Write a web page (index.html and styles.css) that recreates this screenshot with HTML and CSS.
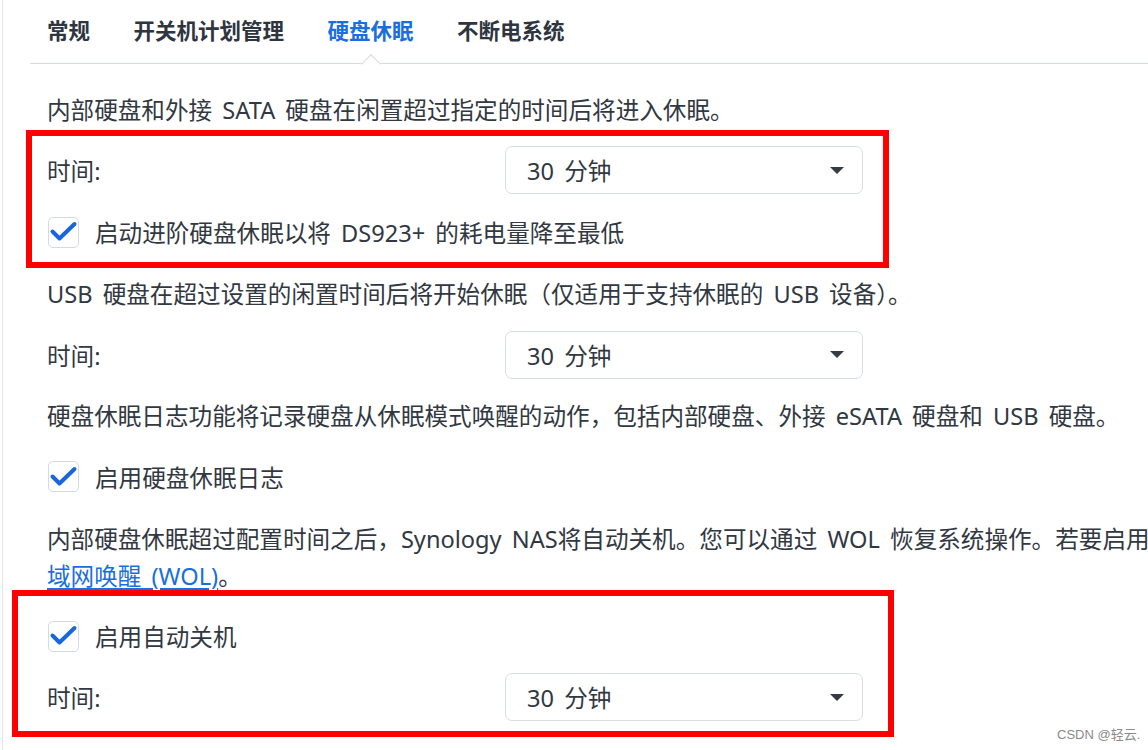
FILE: index.html
```html
<!DOCTYPE html>
<html lang="zh-CN">
<head>
<meta charset="utf-8">
<title>硬盘休眠</title>
<link rel="stylesheet" href="styles.css">
</head>
<body>
<div class="page">
  <div class="tabs">
    <div class="tab">常规</div>
    <div class="tab">开关机计划管理</div>
    <div class="tab active">硬盘休眠</div>
    <div class="tab">不断电系统</div>
  </div>
  <div class="content">
    <div class="para">内部硬盘和外接 SATA 硬盘在闲置超过指定的时间后将进入休眠。</div>
    <div class="field">
      <span class="label">时间:</span>
      <div class="select"><span>30 分钟</span><span class="caret"></span></div>
    </div>
    <div class="check">
      <span class="box"><svg viewBox="0 0 31 31" width="31" height="31"><path d="M4.5 15.5 L11.5 22.5 L26.5 8" fill="none" stroke="#1766dc" stroke-width="4" stroke-linecap="round" stroke-linejoin="round"/></svg></span>
      <span class="check-label">启动进阶硬盘休眠以将 DS923+ 的耗电量降至最低</span>
    </div>
    <div class="para">USB 硬盘在超过设置的闲置时间后将开始休眠（仅适用于支持休眠的 USB 设备）。</div>
    <div class="field">
      <span class="label">时间:</span>
      <div class="select"><span>30 分钟</span><span class="caret"></span></div>
    </div>
    <div class="para">硬盘休眠日志功能将记录硬盘从休眠模式唤醒的动作，包括内部硬盘、外接 eSATA 硬盘和 USB 硬盘。</div>
    <div class="check">
      <span class="box"><svg viewBox="0 0 31 31" width="31" height="31"><path d="M4.5 15.5 L11.5 22.5 L26.5 8" fill="none" stroke="#1766dc" stroke-width="4" stroke-linecap="round" stroke-linejoin="round"/></svg></span>
      <span class="check-label">启用硬盘休眠日志</span>
    </div>
    <div class="para">内部硬盘休眠超过配置时间之后，Synology NAS将自动关机。您可以通过 WOL 恢复系统操作。若要启用<a class="link" href="#">局</a><br><a class="link" href="#">域网唤醒 (WOL)</a>。</div>
    <div class="check">
      <span class="box"><svg viewBox="0 0 31 31" width="31" height="31"><path d="M4.5 15.5 L11.5 22.5 L26.5 8" fill="none" stroke="#1766dc" stroke-width="4" stroke-linecap="round" stroke-linejoin="round"/></svg></span>
      <span class="check-label">启用自动关机</span>
    </div>
    <div class="field">
      <span class="label">时间:</span>
      <div class="select"><span>30 分钟</span><span class="caret"></span></div>
    </div>
  </div>
  <div class="mark mark-one"></div>
  <div class="mark mark-two"></div>
  <div class="watermark">CSDN @轻云.</div>
</div>
</body>
</html>
```

FILE: styles.css
```css
html, body {
  margin: 0;
  padding: 0;
  background: #ffffff;
  overflow: hidden;
  width: 1148px;
  height: 750px;
}

body {
  font-family: "Noto Sans", "Noto Sans CJK SC", sans-serif;
  color: #313842;
}

.page {
  position: relative;
  margin-left: 2px;
  border-left: 1px solid #e4e6e9;
  height: 750px;
  box-sizing: border-box;
  overflow: hidden;
}

.tabs {
  display: flex;
  gap: 43.5px;
  margin-left: 27px;
  padding-left: 17px;
  height: 63px;
  border-bottom: 1px solid #d3dce6;
}

.tab {
  position: relative;
  height: 63px;
  line-height: 62px;
  font-size: 21.5px;
  font-weight: 700;
  color: #2e353f;
  white-space: nowrap;
}

.tab.active {
  color: #1a6fe0;
}

.tab.active::after {
  content: "";
  position: absolute;
  left: 50%;
  top: 56.5px;
  width: 14px;
  height: 14px;
  box-sizing: border-box;
  background: #ffffff;
  border-top: 1px solid #d3dce6;
  border-left: 1px solid #d3dce6;
  transform: translateX(-50%) rotate(45deg);
}

.content {
  display: flex;
  flex-direction: column;
  padding-left: 44px;
  padding-top: 27.5px;
  font-size: 23.6px;
  word-spacing: 4px;
}

.para {
  line-height: 37px;
  white-space: nowrap;
}

.field {
  display: flex;
  align-items: center;
  height: 48px;
}

.label {
  width: 458px;
  flex: none;
}

.select {
  width: 358px;
  height: 48px;
  box-sizing: border-box;
  border: 1px solid #d5dde7;
  border-radius: 7px;
  display: flex;
  align-items: center;
  justify-content: space-between;
  padding-left: 21px;
  padding-right: 18px;
}

.caret {
  width: 0;
  height: 0;
  border-left: 7.5px solid transparent;
  border-right: 7.5px solid transparent;
  border-top: 7px solid #353b43;
}

.check {
  display: flex;
  align-items: center;
  height: 48px;
}

.box {
  width: 31px;
  height: 31px;
  margin-left: 1px;
  box-sizing: border-box;
  border: 1.5px solid #d2dae5;
  border-radius: 5px;
  background: #ffffff;
  position: relative;
  flex: none;
}

.box svg {
  position: absolute;
  left: -1.5px;
  top: -1.5px;
}

.check-label {
  margin-left: 16px;
}

.para + .field { margin-top: 17.5px; }
.field + .check { margin-top: 14px; }
.check + .para { margin-top: 20px; }
.para + .check { margin-top: 17.5px; }
.field + .para { margin-top: 19.5px; }
.check + .field { margin-top: 13px; }

.link {
  color: #1a6fe0;
  text-decoration: underline;
  text-underline-offset: 3px;
}

.mark {
  position: absolute;
  border: 6px solid #ff0000;
  box-sizing: border-box;
  pointer-events: none;
}

.mark-one {
  left: 23px;
  top: 130px;
  width: 863px;
  height: 138px;
}

.mark-two {
  left: 9px;
  top: 590px;
  width: 882px;
  height: 147px;
}

.watermark {
  position: absolute;
  left: 1054px;
  top: 724px;
  font-family: "Liberation Sans", "Noto Sans CJK SC", sans-serif;
  font-size: 13px;
  color: #8a8a8a;
  white-space: nowrap;
}
```
